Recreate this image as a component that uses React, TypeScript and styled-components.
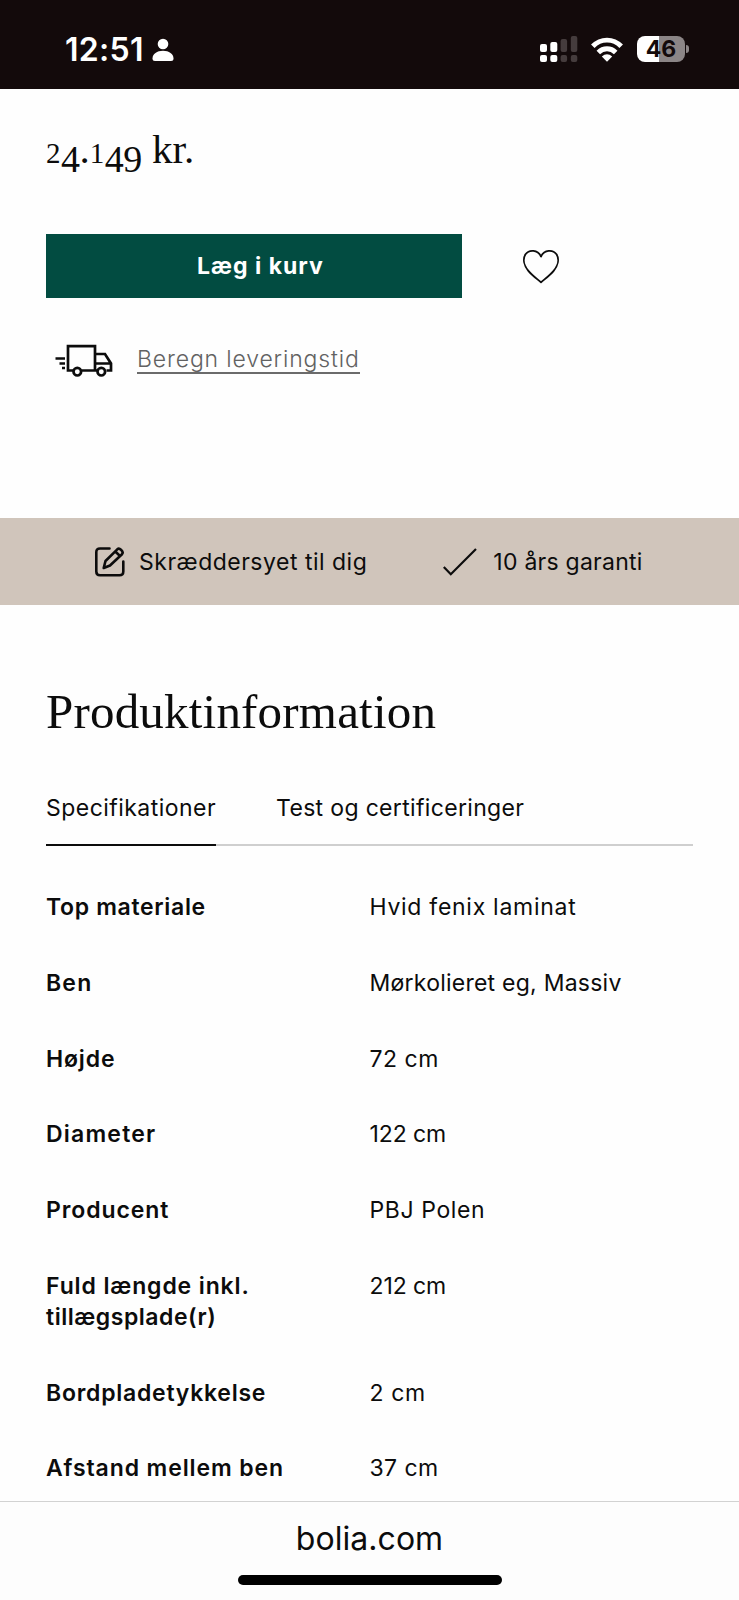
import React from 'react';
import styled, { createGlobalStyle } from 'styled-components';

const GlobalStyle = createGlobalStyle`
  * { box-sizing: border-box; }
  body { margin: 0; background: #fff; color: #0c0c0c; font-family: Inter, sans-serif; }
`;

const Page = styled.div`
  width: 739px;
  height: 1600px;
  display: flex;
  flex-direction: column;
  overflow: hidden;
  background: #fefefe;
`;

const StatusBar = styled.header`
  height: 89px;
  flex: none;
  display: flex;
  justify-content: space-between;
  padding: 0 50px 0 65px;
  background: #130a0b;
  color: #fff;
`;

const Clock = styled.div`
  display: flex;
  align-items: center;
  gap: 8px;
  height: 99px;
  font-size: 32px;
  font-weight: 600;
  letter-spacing: 0.3px;
`;

const StatusIcons = styled.div`
  display: flex;
  align-items: center;
  height: 98px;
`;

const Signal = styled.svg`
  margin-right: 13px;
`;

const Wifi = styled.svg`
  margin-right: 14px;
`;

const Battery = styled.div`
  width: 48px;
  height: 26px;
  border-radius: 8px;
  background: linear-gradient(90deg, #fff 46%, #8b8586 46%);
  color: #130a0b;
  font-size: 23px;
  font-weight: 700;
  line-height: 27px;
  text-align: center;
  letter-spacing: 0;
`;

const BatteryTip = styled.div`
  width: 3px;
  height: 8px;
  margin-left: 1px;
  border-radius: 0 3px 3px 0;
  background: #8b8586;
`;

const Purchase = styled.section`
  height: 429px;
  flex: none;
  padding: 30px 46px 0;
`;

const Price = styled.div`
  height: 60px;
  font-family: 'Liberation Serif', serif;
  font-size: 41px;
  line-height: 60px;
  white-space: nowrap;
`;

const LowDigit = styled.span`
  font-size: 29px;
  line-height: 1;
  letter-spacing: 0.5px;
`;

const DeepDigit = styled.span`
  font-size: 38px;
  line-height: 1;
  letter-spacing: -0.5px;
  vertical-align: -9px;
`;

const BuyRow = styled.div`
  display: flex;
  align-items: center;
  gap: 60px;
  margin-top: 55px;
`;

const BuyButton = styled.button`
  width: 416px;
  height: 64px;
  padding: 0 0 1px 13px;
  border: 0;
  background: #024c41;
  color: #fff;
  font: 700 23px Inter, sans-serif;
  letter-spacing: 1px;
`;

const DeliveryRow = styled.div`
  display: flex;
  align-items: flex-start;
  gap: 24px;
  margin-top: 45px;
  padding-left: 9px;
`;

const DeliveryLink = styled.a`
  height: 31px;
  width: 223px;
  border-bottom: 2px solid #6b6b6b;
  color: #626262;
  font-size: 23px;
  font-weight: 300;
  line-height: 33px;
  letter-spacing: 0.85px;
  white-space: nowrap;
`;

const Benefits = styled.section`
  height: 87px;
  flex: none;
  display: flex;
  align-items: center;
  padding-left: 95px;
  background: #d0c5bb;
`;

const Benefit = styled.div<{ $spacing: number; $gap: number }>`
  display: flex;
  align-items: center;
  gap: ${(p) => p.$gap}px;
  margin-right: 76px;
  font-size: 23px;
  line-height: 30px;
  letter-spacing: ${(p) => p.$spacing}px;
  white-space: nowrap;
`;

const Information = styled.section`
  flex: 1;
  min-height: 0;
  padding: 78px 46px 0;
`;

const Title = styled.h2`
  margin: 0;
  font: 400 49px/58px 'Liberation Serif', serif;
  letter-spacing: 0.2px;
`;

const Tabs = styled.nav`
  display: flex;
  gap: 60px;
  height: 72px;
  margin-top: 33px;
  border-bottom: 2px solid #cfcfcf;
`;

const Tab = styled.div<{ $active?: boolean; $spacing: number }>`
  height: 72px;
  border-bottom: 2px solid ${(p) => (p.$active ? '#0c0c0c' : 'transparent')};
  font-size: 23px;
  line-height: 69px;
  letter-spacing: ${(p) => p.$spacing}px;
  white-space: nowrap;
`;

const Specs = styled.dl`
  display: flex;
  flex-direction: column;
  gap: 45px;
  margin: 46px 0 0;
`;

const Spec = styled.div`
  display: grid;
  grid-template-columns: 323.5px 1fr;
  font-size: 23px;
  line-height: 30.8px;
`;

const Label = styled.dt<{ $spacing: number }>`
  font-weight: 600;
  letter-spacing: ${(p) => p.$spacing}px;
`;

const Value = styled.dd<{ $spacing: number }>`
  margin: 0;
  font-weight: 400;
  letter-spacing: ${(p) => p.$spacing}px;
`;

const AddressBar = styled.footer`
  height: 99px;
  flex: none;
  display: flex;
  flex-direction: column;
  align-items: center;
  border-top: 1px solid #d2d2d2;
  background: #fdfdfd;
`;

const Address = styled.div`
  height: 73px;
  font-size: 32px;
  line-height: 74px;
  letter-spacing: 0.05px;
`;

const HomeIndicator = styled.div`
  width: 264px;
  height: 10px;
  border-radius: 5px;
  background: #000;
`;

type Text = [text: string, spacing: number];

const specs: { label: Text[]; value: Text }[] = [
  { label: [['Top materiale', 0.67]], value: ['Hvid fenix laminat', 0.72] },
  { label: [['Ben', 1.2]], value: ['Mørkolieret eg, Massiv', 0.24] },
  { label: [['Højde', 0.85]], value: ['72 cm', 0.5] },
  { label: [['Diameter', 1.2]], value: ['122 cm', -0.1] },
  { label: [['Producent', 0.9]], value: ['PBJ Polen', 0.6] },
  { label: [['Fuld længde inkl.', 0.88], ['tillægsplade(r)', 0.53]], value: ['212 cm', -0.1] },
  { label: [['Bordpladetykkelse', 0.75]], value: ['2 cm', 0.6] },
  { label: [['Afstand mellem ben', 0.9]], value: ['37 cm', 0.4] },
];

export default function App() {
  return (
    <Page>
      <GlobalStyle />
      <StatusBar>
        <Clock>
          12:51
          <svg width="22" height="24" viewBox="0 0 22 24" fill="#fff">
            <circle cx="11" cy="6" r="5.3" />
            <path d="M.5 20.5C.5 16 5 12.8 11 12.8S21.500 16 21.500 20.500Q21.500 23 19 23H3Q.5 23 .5 20.500Z" />
          </svg>
        </Clock>
        <StatusIcons>
          <Signal width="38" height="28" viewBox="0 0 38 28">
            <g fill="#fff">
              <rect x="0" y="9" width="7" height="8" rx="2" />
              <rect x="0" y="20" width="7" height="7" rx="2" />
              <rect x="10.300" y="7" width="7" height="10" rx="2" />
              <rect x="10.300" y="20" width="7" height="7" rx="2" />
            </g>
            <g fill="#453c3d">
              <rect x="20.600" y="4" width="6.500" height="13" rx="2" />
              <rect x="20.600" y="20" width="6.500" height="7" rx="2" />
              <rect x="30.800" y="1" width="6.500" height="16" rx="2" />
              <rect x="30.800" y="20" width="6.500" height="7" rx="2" />
            </g>
          </Signal>
          <Wifi width="32" height="25" viewBox="0 0 32 25" fill="none" stroke="#fff" strokeWidth="4.900">
            <path d="M1.800 9.300C9.800 1 22.200 1 30.200 9.300" />
            <path d="M7.300 15.500C12.200 10.500 19.800 10.500 24.700 15.500" />
            <path d="M16 24.800L10.800 19.500Q16 15.100 21.200 19.500Z" fill="#fff" stroke="none" />
          </Wifi>
          <Battery>46</Battery>
          <BatteryTip />
        </StatusIcons>
      </StatusBar>

      <Purchase>
        <Price>
          <LowDigit>2</LowDigit>
          <DeepDigit>4</DeepDigit>.<LowDigit>1</LowDigit>
          <DeepDigit>49</DeepDigit> kr.
        </Price>
        <BuyRow>
          <BuyButton>Læg i kurv</BuyButton>
          <svg width="38" height="35" viewBox="0 0 40 36" fill="none" stroke="#0c0c0c" strokeWidth="1.900" strokeLinejoin="round">
            <path d="M20 7.500C16.500 .1 7.500-.2 3.700 5.200C.4 10.200 2.300 17 6.500 22.300C10.700 27.500 16.500 31.500 20 34.700C23.500 31.500 29.300 27.500 33.500 22.300C37.700 17 39.600 10.200 36.300 5.200C32.500-.2 23.500.1 20 7.500Z" />
          </svg>
        </BuyRow>
        <DeliveryRow>
          <svg width="58" height="34" viewBox="0 0 58 34" fill="none" stroke="#0c0c0c" strokeWidth="2.700">
            <path d="M18 27.500H13V3.200H40V27.500H26.500M40 11H50L56 20.500V27.500H51.500M40 27.500H42M40 20.500H56M.5 15.500H10M4.500 20.500H10M7 25H10" />
            <circle cx="22.300" cy="28.700" r="3.800" />
            <circle cx="46.300" cy="28.700" r="3.800" />
          </svg>
          <DeliveryLink>Beregn leveringstid</DeliveryLink>
        </DeliveryRow>
      </Purchase>

      <Benefits>
        <Benefit $spacing={0.5} $gap={14}>
          <svg width="30" height="30" viewBox="0 0 30 30" fill="none" stroke="#0c0c0c" strokeWidth="2.600" strokeLinecap="round" strokeLinejoin="round">
            <path d="M14.500 1.500H5Q1.300 1.500 1.300 5.200V24.500Q1.300 28.300 5 28.300H24.500Q28.300 28.300 28.300 24.500V14.500" />
            <path d="M8.700 21L10.500 14L22.300 2.300Q24 .9 26 2.800Q28.700 5.200 27 7.300L15 18.500ZM20.300 4.500L25 9" />
          </svg>
          Skræddersyet til dig
        </Benefit>
        <Benefit $spacing={0.25} $gap={16}>
          <svg width="34" height="28" viewBox="0 0 34 28" fill="none" stroke="#0c0c0c" strokeWidth="2.200">
            <path d="M.8 19L7.800 26.300L33 1" />
          </svg>
          10 års garanti
        </Benefit>
      </Benefits>

      <Information>
        <Title>Produktinformation</Title>
        <Tabs>
          <Tab $active $spacing={0.46}>Specifikationer</Tab>
          <Tab $spacing={0.33}>Test og certificeringer</Tab>
        </Tabs>
        <Specs>
          {specs.map(({ label, value }) => (
            <Spec key={label[0][0]}>
              <div>
                {label.map(([text, spacing]) => (
                  <Label key={text} $spacing={spacing}>{text}</Label>
                ))}
              </div>
              <Value $spacing={value[1]}>{value[0]}</Value>
            </Spec>
          ))}
        </Specs>
      </Information>

      <AddressBar>
        <Address>bolia.com</Address>
        <HomeIndicator />
      </AddressBar>
    </Page>
  );
}
